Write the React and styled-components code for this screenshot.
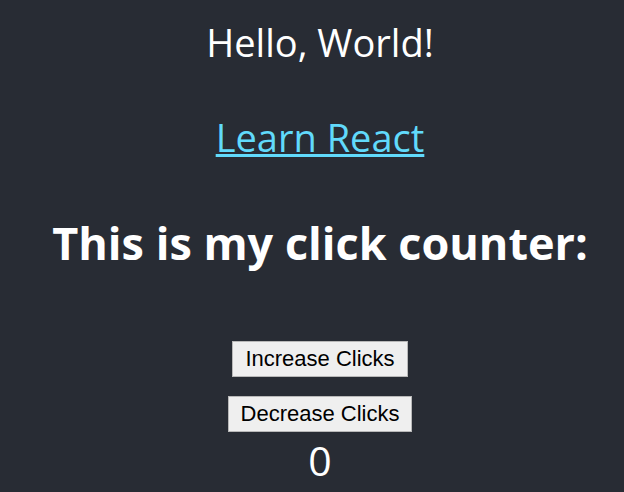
import React, { useState } from 'react';
import styled, { createGlobalStyle } from 'styled-components';

const GlobalStyle = createGlobalStyle`
  html, body {
    margin: 0;
    padding: 0;
    background: #282c34;
  }
`;

const Page = styled.div`
  min-height: 492px;
  background: #282c34;
  color: #fff;
  font-family: 'Open Sans', 'Noto Sans', sans-serif;
  display: flex;
  flex-direction: column;
  align-items: center;
  padding: 20px 0 0 16px;
  box-sizing: border-box;
`;

const Greeting = styled.p`
  margin: 0;
  font-size: 38px;
  line-height: 1.2;
`;

const Link = styled.a`
  margin-top: 49px;
  font-size: 38px;
  line-height: 1.2;
  color: #61dafb;
`;

const Title = styled.h1`
  margin: 56px 0 0;
  font-size: 45px;
  font-weight: 700;
  line-height: 1.2;
  white-space: nowrap;
`;

const Controls = styled.div`
  display: flex;
  flex-direction: column;
  align-items: center;
  gap: 19px;
  margin-top: 71px;
`;

const Button = styled.button`
  height: 36px;
  padding: 0 12px;
  font-family: 'Liberation Sans', Arial, sans-serif;
  font-size: 22px;
  color: #000;
  background: #efefef;
  border: 1px solid #b8b8b8;
  border-radius: 0;
  cursor: pointer;
`;

const Count = styled.p`
  margin: 4px 0 0;
  font-size: 41px;
  line-height: 1.2;
`;

export default function App() {
  const [count, setCount] = useState(0);
  return (
    <Page>
      <GlobalStyle />
      <Greeting>Hello, World!</Greeting>
      <Link href="https://reactjs.org" target="_blank" rel="noopener noreferrer">
        Learn React
      </Link>
      <Title>This is my click counter:</Title>
      <Controls>
        <Button onClick={() => setCount(count + 1)}>Increase Clicks</Button>
        <Button onClick={() => setCount(count - 1)}>Decrease Clicks</Button>
      </Controls>
      <Count>{count}</Count>
    </Page>
  );
}
